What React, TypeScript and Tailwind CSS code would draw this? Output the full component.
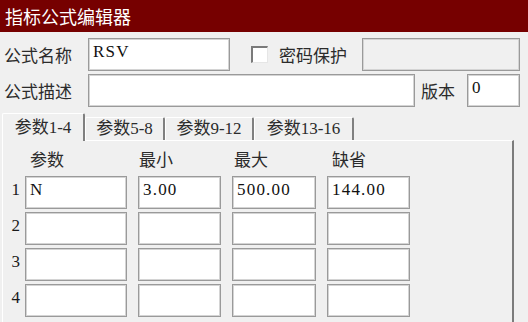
import React from 'react';

const field =
  'h-[33px] bg-white border border-[#9a9a9a] shadow-[inset_0_0_0_1px_#d4d4d4] pl-[4px] pt-[3px] text-[17px] leading-[20px] tracking-[1.2px] text-[#111] whitespace-nowrap';

const Field: React.FC<{ w: string; value?: string; muted?: boolean }> = ({ w, value, muted }) => (
  <div className={`${field} ${w} ${muted ? '!bg-[#f0f0f0]' : ''}`}>{value}</div>
);

const cjk = "font-['Noto_Sans_CJK_SC',sans-serif] text-[#2b2b2b]";

const tabs = [
  { label: '参数1-4', w: 'w-[83px]', active: true },
  { label: '参数5-8', w: 'w-[80px]', active: false },
  { label: '参数9-12', w: 'w-[89px]', active: false },
  { label: '参数13-16', w: 'w-[100px]', active: false },
];

const rows = [
  ['N', '3.00', '500.00', '144.00'],
  ['', '', '', ''],
  ['', '', '', ''],
  ['', '', '', ''],
];

const App: React.FC = () => {
  return (
    <div className="w-[528px] h-[322px] overflow-hidden bg-[#f0f0f0] text-[#1a1a1a] text-[17px] font-['Liberation_Serif','Noto_Sans_CJK_SC',serif]">
      {/* Title bar */}
      <div className="h-[32px] bg-[#760000] text-white text-[18px] leading-[32px] pl-[5px] font-['Noto_Sans_CJK_SC',sans-serif]">
        指标公式编辑器
      </div>

      {/* Name / description */}
      <div className="pt-[6px] pr-[8px] flex flex-col gap-[3px]">
        <div className="flex items-center h-[33px]">
          <div className={`w-[88px] pl-[4px] ${cjk}`}>公式名称</div>
          <Field w="w-[142px]" value="RSV" />
          <div className="ml-[21px] w-[17px] h-[17px] bg-white border-t-2 border-l-2 border-[#7a7a7a] border-r border-b border-r-[#e6e6e6] border-b-[#e6e6e6]" />
          <div className={`ml-[11px] ${cjk}`}>密码保护</div>
          <div className="ml-auto">
            <Field w="w-[158px]" muted />
          </div>
        </div>
        <div className="flex items-center h-[33px]">
          <div className={`w-[88px] pl-[4px] ${cjk}`}>公式描述</div>
          <Field w="w-[327px]" />
          <div className={`ml-[6px] ${cjk}`}>版本</div>
          <div className="ml-auto">
            <Field w="w-[53px]" value="0" />
          </div>
        </div>
      </div>

      {/* Tabs */}
      <div className="mt-[6px] pl-[2px] h-[27px] flex items-end text-[#2b2b2b]">
        {tabs.map((t) => (
          <div
            key={t.label}
            className={`${t.w} flex items-center justify-center border-t border-l border-white border-r-2 border-r-[#808080] rounded-t-[2px] bg-[#f0f0f0] ${
              t.active ? 'h-[28px] -mb-[1px] relative z-10' : 'h-[23px]'
            }`}
          >
            {t.label}
          </div>
        ))}
      </div>

      {/* Panel */}
      <div className="ml-[2px] w-[512px] h-[200px] border-t border-l border-white border-r-2 border-r-[#7c7c7c]">
        <div className={`h-[35px] flex items-center pl-[22px] ${cjk}`}>
          <div className="w-[113px] pl-[5px]">参数</div>
          <div className="w-[94px] pl-[1px]">最小</div>
          <div className="w-[95px] pl-[2px]">最大</div>
          <div className="pl-[5px]">缺省</div>
        </div>
        <div className="flex flex-col gap-[3px]">
          {rows.map((r, i) => (
            <div key={i} className="flex items-center h-[33px]">
              <div className="w-[22px] pr-[5px] pb-[6px] text-right">{i + 1}</div>
              <Field w="w-[102px]" value={r[0]} />
              <div className="ml-[11px]">
                <Field w="w-[83px]" value={r[1]} />
              </div>
              <div className="ml-[11px]">
                <Field w="w-[84px]" value={r[2]} />
              </div>
              <div className="ml-[11px]">
                <Field w="w-[83px]" value={r[3]} />
              </div>
            </div>
          ))}
        </div>
      </div>
    </div>
  );
};

export default App;
